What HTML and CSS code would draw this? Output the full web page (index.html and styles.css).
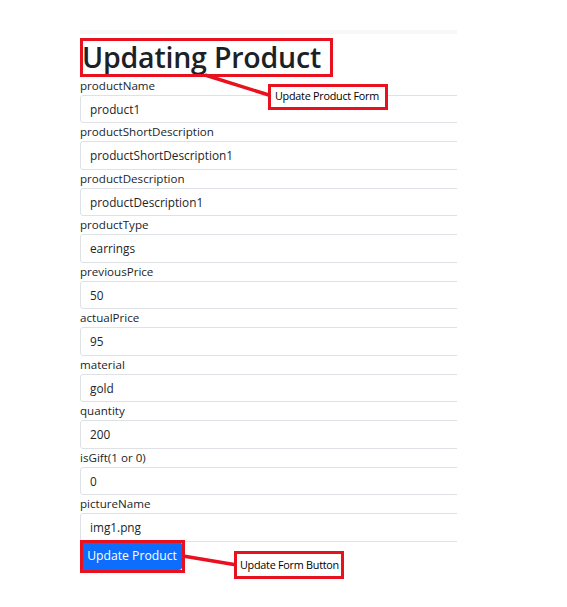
FILE: index.html
```html
<!DOCTYPE html>
<html>
<head>
<meta charset="utf-8">
<link rel="stylesheet" href="styles.css">
</head>
<body>
<div class="page">
  <div class="frame">
    <div class="strip"></div>
    <h1 class="title">Updating Product</h1>
    <form class="form">
      <div class="group"><label class="label">productName</label><div class="input">product1</div></div>
      <div class="group"><label class="label">productShortDescription</label><div class="input">productShortDescription1</div></div>
      <div class="group"><label class="label">productDescription</label><div class="input">productDescription1</div></div>
      <div class="group"><label class="label">productType</label><div class="input">earrings</div></div>
      <div class="group"><label class="label">previousPrice</label><div class="input">50</div></div>
      <div class="group"><label class="label">actualPrice</label><div class="input">95</div></div>
      <div class="group"><label class="label">material</label><div class="input">gold</div></div>
      <div class="group"><label class="label">quantity</label><div class="input">200</div></div>
      <div class="group"><label class="label">isGift(1 or 0)</label><div class="input">0</div></div>
      <div class="group"><label class="label">pictureName</label><div class="input">img1.png</div></div>
      <button type="button" class="btn">Update Product</button>
    </form>
  </div>

  <svg class="lines" width="567" height="607" viewBox="0 0 567 607">
    <line x1="205" y1="75" x2="272" y2="96" stroke="#e8111f" stroke-width="3.5"/>
    <line x1="183" y1="556" x2="237" y2="565" stroke="#e8111f" stroke-width="3.5"/>
  </svg>
  <div class="hl hl-title"></div>
  <div class="hl hl-btn"></div>
  <div class="note note-form">Update Product Form</div>
  <div class="note note-btn">Update Form Button</div>
</div>
</body>
</html>
```

FILE: styles.css
```css
html, body {
  margin: 0;
  padding: 0;
  background: #ffffff;
}

.page {
  position: relative;
  width: 567px;
  height: 607px;
  overflow: hidden;
  font-family: "Open Sans", "Noto Sans", sans-serif;
  color: #212529;
}

.frame {
  margin: 30px 0 0 80px;
  width: 377px;
  overflow: hidden;
}

.strip {
  height: 4px;
  background: #f6f7f9;
}

.title {
  margin: 0 0 0 2px;
  padding-top: 5px;
  height: 42.5px;
  box-sizing: border-box;
  font-size: 28.5px;
  line-height: 36px;
  font-weight: 600;
  letter-spacing: -0.2px;
  color: #1c2125;
}

.form {
  display: flex;
  flex-direction: column;
  width: 420px;
}

.group {
  display: flex;
  flex-direction: column;
}

.label {
  height: 18px;
  line-height: 18px;
  font-size: 11.6px;
  color: #212529;
}

.input {
  box-sizing: border-box;
  height: 28.5px;
  line-height: 26.5px;
  padding: 0 9px;
  border: 1px solid #dee2e6;
  border-radius: 3px;
  font-size: 11.8px;
  color: #212529;
}

.btn {
  align-self: flex-start;
  box-sizing: border-box;
  height: 28.5px;
  width: 102px;
  margin: 0;
  padding: 0 0 0 2px;
  border: none;
  border-radius: 3px;
  background: #0d6efd;
  color: #ffffff;
  font-family: "Open Sans", "Noto Sans", sans-serif;
  font-size: 12.2px;
}

.lines {
  position: absolute;
  left: 0;
  top: 0;
}

.hl {
  position: absolute;
  box-sizing: border-box;
  border: 3.5px solid #e8111f;
}

.hl-title {
  left: 80px;
  top: 38px;
  width: 253px;
  height: 39px;
}

.hl-btn {
  left: 80px;
  top: 540px;
  width: 105px;
  height: 33px;
}

.note {
  position: absolute;
  box-sizing: border-box;
  border: 3.5px solid #e8111f;
  background: #ffffff;
  color: #000000;
  font-family: "Open Sans", "Noto Sans", sans-serif;
  font-size: 10.8px;
  line-height: 18px;
  padding: 0 0 0 4px;
  white-space: nowrap;
  letter-spacing: -0.25px;
}

.note-form {
  left: 268px;
  top: 84px;
  width: 120px;
  height: 26px;
}

.note-btn {
  left: 234px;
  top: 551px;
  width: 110px;
  height: 28px;
  line-height: 21px;
  padding-left: 3px;
}
```
